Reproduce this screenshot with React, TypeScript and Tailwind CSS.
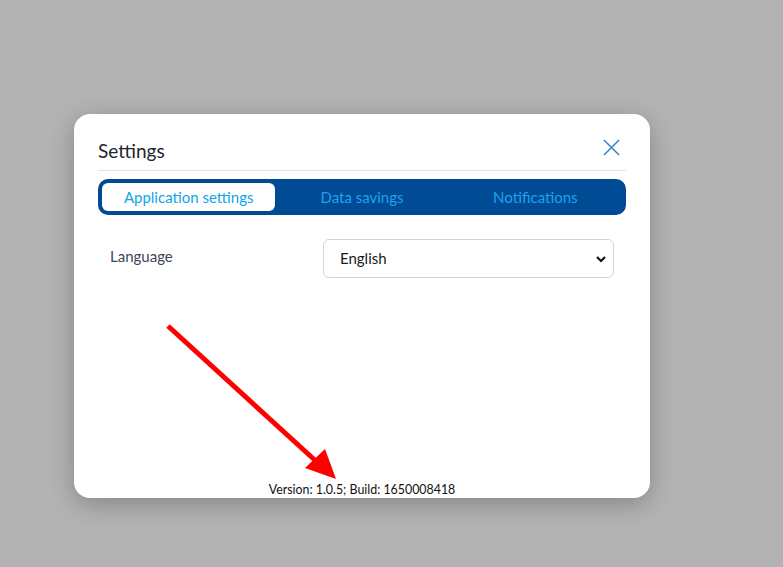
import React from "react";

export default function App() {
  return (
    <div
      className="relative w-[783px] h-[567px] bg-[#b3b3b3] overflow-hidden"
      style={{ fontFamily: "Lato, 'Noto Sans', sans-serif" }}
    >
      <div className="absolute left-[74px] top-[114px] w-[576px] h-[384px] bg-white rounded-[16px] shadow-[0_6px_24px_rgba(0,0,0,0.25)] flex flex-col px-[24px] pt-[22px]">
        <div className="flex items-center justify-between h-[28px]">
          <h2 className="text-[19px] text-[#1f2430] leading-none pt-[0px]">Settings</h2>
          <button className="mr-[6px] -mt-[6px] text-[#3b82c4]">
            <svg width="17" height="17" viewBox="0 0 18 18" fill="none" stroke="currentColor" strokeWidth="1.6">
              <path d="M1 1 L17 17 M17 1 L1 17" />
            </svg>
          </button>
        </div>
        <div className="mt-[6px] h-px bg-[#e3e3e3]" />
        <div className="mt-[8px] h-[36px] bg-[#004b93] rounded-[10px] p-[4px] flex text-[15px]">
          <div className="flex-1 bg-white rounded-[6px] flex items-center justify-center text-[#0ea5e9]">
            Application settings
          </div>
          <div className="flex-1 flex items-center justify-center text-[#1ea3ec]">Data savings</div>
          <div className="flex-1 flex items-center justify-center text-[#1ea3ec]">Notifications</div>
        </div>
        <div className="mt-[24px] flex items-center justify-between pr-[12px]">
          <span className="ml-[12px] text-[15px] text-[#3f4656] -mt-[4px]">Language</span>
          <div className="w-[291px] h-[39px] border border-[#d4d4d4] rounded-[6px] flex items-center justify-between pl-[16px] pr-[6px] text-[15px] text-[#1a1a1a]">
            <span>English</span>
            <svg width="12" height="10" viewBox="0 0 12 10" fill="none" stroke="#111" strokeWidth="2.2">
              <path d="M2 3 L6 7 L10 3" />
            </svg>
          </div>
        </div>
        <div className="flex-1" />
        <div className="text-center text-[12.4px] text-[#111] leading-[16px]">
          Version: 1.0.5; Build: 1650008418
        </div>
      </div>
      <svg className="absolute left-0 top-0 pointer-events-none" width="783" height="567">
        <line x1="168" y1="326" x2="318" y2="463" stroke="#ff0000" strokeWidth="5" />
        <polygon points="305,468 336,479 325,449" fill="#ff0000" />
      </svg>
    </div>
  );
}
